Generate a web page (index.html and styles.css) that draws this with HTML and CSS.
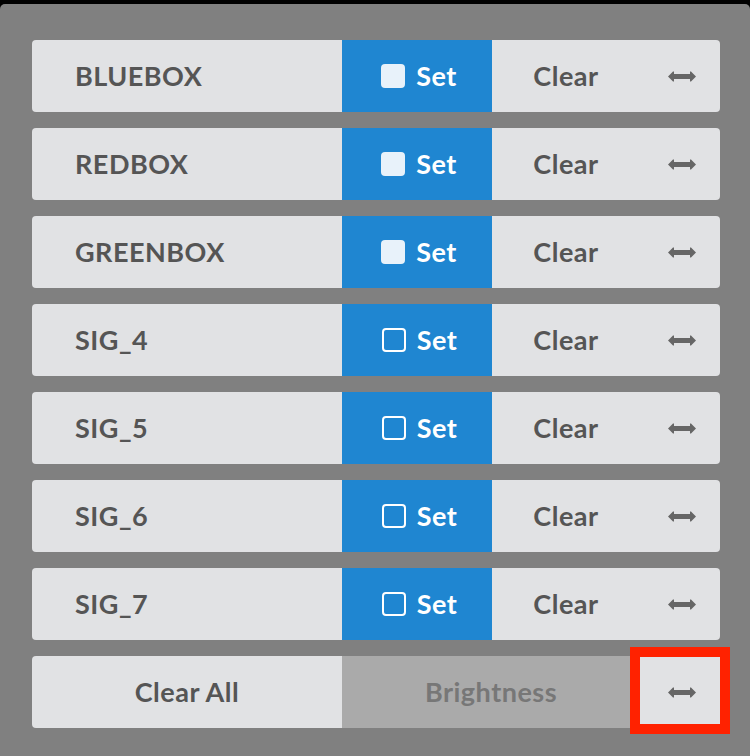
FILE: index.html
```html
<!DOCTYPE html>
<html>
<head>
<meta charset="utf-8">
<link rel="stylesheet" href="styles.css">
</head>
<body>
<div class="topbar"></div>
<div class="panel">
  <div class="row">
    <div class="label">BLUEBOX</div>
    <div class="set"><span class="box filled"></span>Set</div>
    <div class="clear">Clear</div>
    <div class="arrow"><svg width="28" height="11" viewBox="0 0 28 11"><path d="M0 5.5 L5 0.5 L6 0.5 L6 3 L22 3 L22 0.5 L23 0.5 L28 5.5 L23 10.5 L22 10.5 L22 8 L6 8 L6 10.5 L5 10.5 Z" fill="#666"/></svg></div>
  </div>
  <div class="row">
    <div class="label">REDBOX</div>
    <div class="set"><span class="box filled"></span>Set</div>
    <div class="clear">Clear</div>
    <div class="arrow"><svg width="28" height="11" viewBox="0 0 28 11"><path d="M0 5.5 L5 0.5 L6 0.5 L6 3 L22 3 L22 0.5 L23 0.5 L28 5.5 L23 10.5 L22 10.5 L22 8 L6 8 L6 10.5 L5 10.5 Z" fill="#666"/></svg></div>
  </div>
  <div class="row">
    <div class="label">GREENBOX</div>
    <div class="set"><span class="box filled"></span>Set</div>
    <div class="clear">Clear</div>
    <div class="arrow"><svg width="28" height="11" viewBox="0 0 28 11"><path d="M0 5.5 L5 0.5 L6 0.5 L6 3 L22 3 L22 0.5 L23 0.5 L28 5.5 L23 10.5 L22 10.5 L22 8 L6 8 L6 10.5 L5 10.5 Z" fill="#666"/></svg></div>
  </div>
  <div class="row">
    <div class="label">SIG_4</div>
    <div class="set"><span class="box"></span>Set</div>
    <div class="clear">Clear</div>
    <div class="arrow"><svg width="28" height="11" viewBox="0 0 28 11"><path d="M0 5.5 L5 0.5 L6 0.5 L6 3 L22 3 L22 0.5 L23 0.5 L28 5.5 L23 10.5 L22 10.5 L22 8 L6 8 L6 10.5 L5 10.5 Z" fill="#666"/></svg></div>
  </div>
  <div class="row">
    <div class="label">SIG_5</div>
    <div class="set"><span class="box"></span>Set</div>
    <div class="clear">Clear</div>
    <div class="arrow"><svg width="28" height="11" viewBox="0 0 28 11"><path d="M0 5.5 L5 0.5 L6 0.5 L6 3 L22 3 L22 0.5 L23 0.5 L28 5.5 L23 10.5 L22 10.5 L22 8 L6 8 L6 10.5 L5 10.5 Z" fill="#666"/></svg></div>
  </div>
  <div class="row">
    <div class="label">SIG_6</div>
    <div class="set"><span class="box"></span>Set</div>
    <div class="clear">Clear</div>
    <div class="arrow"><svg width="28" height="11" viewBox="0 0 28 11"><path d="M0 5.5 L5 0.5 L6 0.5 L6 3 L22 3 L22 0.5 L23 0.5 L28 5.5 L23 10.5 L22 10.5 L22 8 L6 8 L6 10.5 L5 10.5 Z" fill="#666"/></svg></div>
  </div>
  <div class="row">
    <div class="label">SIG_7</div>
    <div class="set"><span class="box"></span>Set</div>
    <div class="clear">Clear</div>
    <div class="arrow"><svg width="28" height="11" viewBox="0 0 28 11"><path d="M0 5.5 L5 0.5 L6 0.5 L6 3 L22 3 L22 0.5 L23 0.5 L28 5.5 L23 10.5 L22 10.5 L22 8 L6 8 L6 10.5 L5 10.5 Z" fill="#666"/></svg></div>
  </div>
  <div class="row">
    <div class="label center">Clear All</div>
    <div class="bright">Brightness</div>
    <div class="arrow highlight"><svg width="28" height="11" viewBox="0 0 28 11"><path d="M0 5.5 L5 0.5 L6 0.5 L6 3 L22 3 L22 0.5 L23 0.5 L28 5.5 L23 10.5 L22 10.5 L22 8 L6 8 L6 10.5 L5 10.5 Z" fill="#666"/></svg><span class="redbox"></span></div>
  </div>
</div>
</body>
</html>
```

FILE: styles.css
```css
html, body {
  margin: 0;
  padding: 0;
  background: #000;
  width: 750px;
  height: 756px;
  overflow: hidden;
}
.topbar {
  height: 4px;
  background: #000;
}
.panel {
  background: #808080;
  height: 752px;
  border-radius: 5px 5px 0 0;
  box-sizing: border-box;
  padding: 36px 30px 0 32px;
  display: flex;
  flex-direction: column;
  gap: 16px;
  font-family: Lato, "Open Sans", sans-serif;
  font-weight: 700;
  font-size: 27px;
  letter-spacing: 0.5px;
}
.row {
  display: flex;
  height: 72px;
  width: 688px;
}
.label {
  width: 310px;
  background: #e1e2e4;
  color: #555;
  border-radius: 4px 0 0 4px;
  display: flex;
  align-items: center;
  padding: 0 0 2px 43px;
  box-sizing: border-box;
}
.label.center {
  justify-content: center;
  padding-left: 0;
}
.set {
  width: 150px;
  background: #1f86d1;
  color: #fff;
  display: flex;
  align-items: center;
  justify-content: center;
  gap: 11px;
  padding: 0 0 2px 4px;
  box-sizing: border-box;
}
.box {
  width: 20px;
  height: 20px;
  border: 2px solid #fff;
  border-radius: 4px;
  box-sizing: content-box;
  margin: 2px 0 0 1px;
}
.box.filled {
  width: 24px;
  height: 24px;
  border: none;
  background: #e8f2fa;
  border-radius: 4px;
  margin: 2px 0 0 0;
}
.clear {
  width: 148px;
  background: #e1e2e4;
  color: #555;
  display: flex;
  align-items: center;
  justify-content: center;
  padding-bottom: 2px;
  box-sizing: border-box;
}
.bright {
  width: 298px;
  background: #aaaaaa;
  color: #777;
  display: flex;
  align-items: center;
  justify-content: center;
  padding-bottom: 2px;
  box-sizing: border-box;
}
.arrow {
  width: 80px;
  background: #e1e2e4;
  border-radius: 0 4px 4px 0;
  display: flex;
  align-items: center;
  justify-content: center;
  padding-left: 4px;
  box-sizing: border-box;
}
.arrow.highlight {
  position: relative;
  border-radius: 0;
}
.redbox {
  position: absolute;
  left: -10px;
  top: -9px;
  width: 100px;
  height: 87px;
  border: 10px solid #ff2200;
  box-sizing: border-box;
}
```
